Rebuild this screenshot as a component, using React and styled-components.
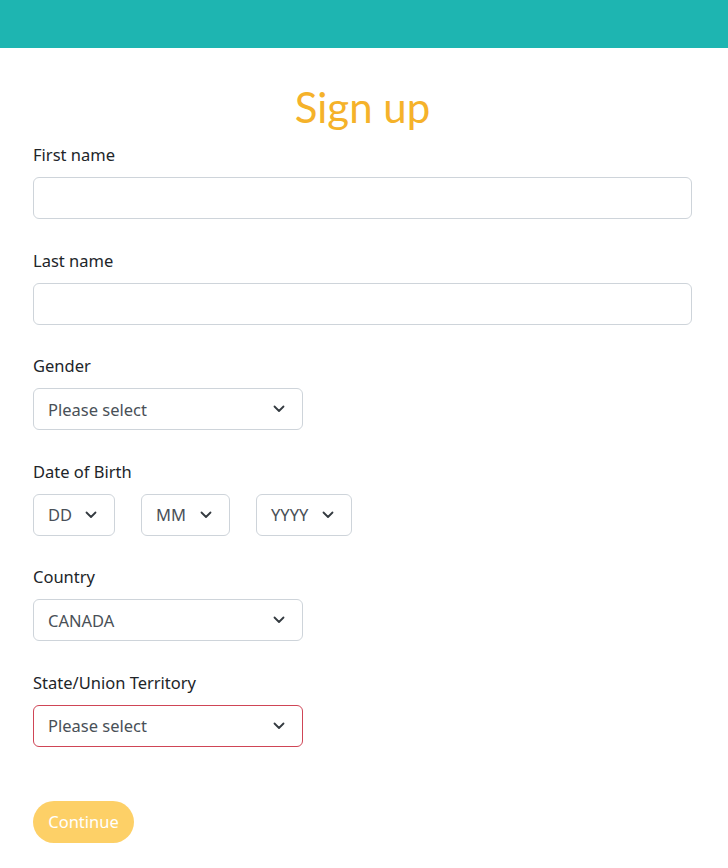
import React from "react";
import styled, { createGlobalStyle } from "styled-components";

const GlobalStyle = createGlobalStyle`
  body {
    margin: 0;
    background: #ffffff;
    font-family: "Noto Sans", "Open Sans", sans-serif;
    color: #212529;
  }
`;

const TopBar = styled.header`
  height: 48px;
  background: #1eb5b1;
`;

const Page = styled.main`
  padding: 34px 36px 24px 33px;
`;

const Title = styled.h1`
  margin: 0 0 11px;
  text-align: center;
  font-family: Lato, "Open Sans", sans-serif;
  font-weight: 400;
  font-size: 42px;
  line-height: 50px;
  color: #f5b22a;
`;

const Field = styled.div`
  display: flex;
  flex-direction: column;
  align-items: flex-start;
  margin-bottom: 29.6px;
`;

const Label = styled.label`
  font-size: 16.5px;
  line-height: 24px;
  margin-bottom: 10px;
`;

const TextInput = styled.input`
  box-sizing: border-box;
  width: 100%;
  height: 42px;
  border: 1px solid #ced4da;
  border-radius: 6px;
  padding: 0 14px;
  font: inherit;
`;

const SelectRow = styled.div`
  display: flex;
  gap: 26px;
`;

const SelectBox = styled.div`
  box-sizing: border-box;
  width: ${(p) => p.$width}px;
  height: 42px;
  display: flex;
  align-items: center;
  justify-content: space-between;
  padding: 0 17px 0 14px;
  border: 1px solid ${(p) => (p.$invalid ? "#cf4556" : "#ced4da")};
  border-radius: 6px;
  font-size: 16.5px;
  color: #495057;
`;

const Chevron = () => (
  <svg width="12" height="8" viewBox="0 0 12 8" fill="none">
    <path d="M1.5 1.5L6 6l4.5-4.5" stroke="#343a40" strokeWidth="1.8" strokeLinecap="round" strokeLinejoin="round" />
  </svg>
);

const Select = ({ width, invalid, children }) => (
  <SelectBox $width={width} $invalid={invalid}>
    <span>{children}</span>
    <Chevron />
  </SelectBox>
);

const ContinueButton = styled.button`
  margin-top: 24px;
  width: 101px;
  height: 42px;
  border: none;
  border-radius: 21px;
  background: #fdd067;
  color: #ffffff;
  font-family: "Noto Sans", "Open Sans", sans-serif;
  font-size: 16.5px;
`;

export default function App() {
  return (
    <>
      <GlobalStyle />
      <TopBar />
      <Page>
        <Title>Sign up</Title>
        <Field>
          <Label>First name</Label>
          <TextInput />
        </Field>
        <Field>
          <Label>Last name</Label>
          <TextInput />
        </Field>
        <Field>
          <Label>Gender</Label>
          <Select width={270}>Please select</Select>
        </Field>
        <Field>
          <Label>Date of Birth</Label>
          <SelectRow>
            <Select width={82}>DD</Select>
            <Select width={89}>MM</Select>
            <Select width={96}>YYYY</Select>
          </SelectRow>
        </Field>
        <Field>
          <Label>Country</Label>
          <Select width={270}>CANADA</Select>
        </Field>
        <Field>
          <Label>State/Union Territory</Label>
          <Select width={270} invalid>Please select</Select>
        </Field>
        <ContinueButton>Continue</ContinueButton>
      </Page>
    </>
  );
}
